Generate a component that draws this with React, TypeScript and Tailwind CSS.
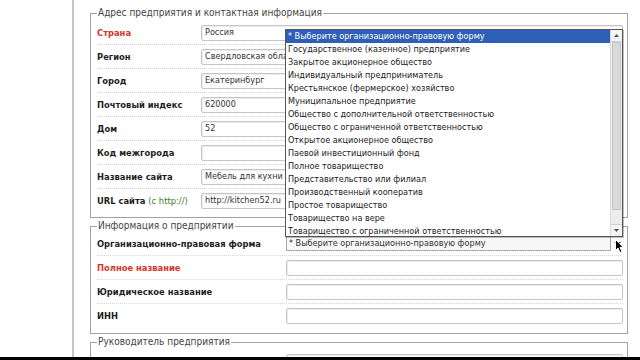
import React from "react";

const F = "'DejaVu Sans Condensed', 'DejaVu Sans', sans-serif";

type Row = { label: React.ReactNode; value?: string; red?: boolean; select?: boolean };

const addr: Row[] = [
  { label: "Страна", value: "Россия", red: true },
  { label: "Регион", value: "Свердловская область" },
  { label: "Город", value: "Екатеринбург" },
  { label: "Почтовый индекс", value: "620000" },
  { label: "Дом", value: "52" },
  { label: "Код межгорода", value: "" },
  { label: "Название сайта", value: "Мебель для кухни" },
  {
    label: (
      <>
        URL сайта <span className="font-normal text-[#3d7d2a]">(с http://)</span>
      </>
    ),
    value: "http://kitchen52.ru",
  },
];

const info: Row[] = [
  { label: "Организационно-правовая форма", select: true },
  { label: "Полное название", red: true, value: "" },
  { label: "Юридическое название", value: "" },
  { label: "ИНН", value: "" },
];

const options = [
  "* Выберите организационно-правовую форму",
  "Государственное (казенное) предприятие",
  "Закрытое акционерное общество",
  "Индивидуальный предприниматель",
  "Крестьянское (фермерское) хозяйство",
  "Муниципальное предприятие",
  "Общество с дополнительной ответственностью",
  "Общество с ограниченной ответственностью",
  "Открытое акционерное общество",
  "Паевой инвестиционный фонд",
  "Полное товарищество",
  "Представительство или филиал",
  "Производственный кооператив",
  "Простое товарищество",
  "Товарищество на вере",
  "Товарищество с ограниченной ответственностью",
];

function Input({ value }: { value?: string }) {
  return (
    <div className="flex-1 h-[16px] border border-[#c6c6c6] rounded-[2px] bg-white shadow-[inset_1px_1px_1px_rgba(0,0,0,0.08)] flex items-center pl-[3px] text-[9px] text-[#333] overflow-hidden whitespace-nowrap">
      {value}
    </div>
  );
}

function Select() {
  return (
    <div className="flex-1 flex items-center h-[16px]">
      <div className="flex-1 h-[15px] border border-[#a8a8a8] bg-[#f7f7f7] flex items-center pl-[2px] text-[9px] text-[#333] whitespace-nowrap overflow-hidden">
        * Выберите организационно-правовую форму
      </div>
      <div className="w-[12px] h-[15px] flex items-center justify-center">
        <svg width="7" height="4" viewBox="0 0 7 4">
          <path d="M0 0 L7 0 L3.5 4 Z" fill="#222" />
        </svg>
      </div>
    </div>
  );
}

function Rows({ rows, labelW }: { rows: Row[]; labelW: string }) {
  return (
    <>
      {rows.map((r, i) => (
        <div
          key={i}
          className={
            "flex items-center h-[24px] " +
            (i < rows.length - 1 ? "border-b border-dotted border-[#d6d6d6]" : "")
          }
        >
          <div
            className={
              labelW +
              " shrink-0 text-[9.3px] font-bold whitespace-nowrap " +
              (r.red ? "text-[#d8332b]" : "text-[#1e1e1e]")
            }
          >
            {r.label}
          </div>
          {r.select ? <Select /> : <Input value={r.value} />}
        </div>
      ))}
    </>
  );
}

function Fieldset({
  title,
  children,
  className,
}: {
  title: string;
  children: React.ReactNode;
  className?: string;
}) {
  return (
    <fieldset className={"border border-[#a3a3a3] pl-[6px] pr-[4px] " + (className ?? "")}>
      <legend className="px-[1px] text-[10px] leading-[12px] text-[#444]">{title}</legend>
      {children}
    </fieldset>
  );
}

function Dropdown() {
  return (
    <div className="absolute left-[285px] top-[29px] w-[338px] h-[208px] bg-white border border-[#555] shadow-[1px_1px_0_rgba(0,0,0,0.25)] flex">
      <div className="flex-1 flex flex-col overflow-hidden">
        {options.map((o, i) => (
          <div
            key={i}
            className={
              "h-[13px] leading-[13px] pl-[2px] text-[9px] whitespace-nowrap " +
              (i === 0 ? "bg-[#2e5fb6] text-white" : "text-[#222]")
            }
          >
            {o}
          </div>
        ))}
      </div>
      <div className="w-[12px] flex flex-col bg-[#ededed] border-l border-[#dcdcdc]">
        <div className="h-[12px] flex items-center justify-center bg-[#f4f4f4] border-b border-[#d0d0d0]">
          <svg width="5" height="3" viewBox="0 0 5 3">
            <path d="M0 3 L5 3 L2.5 0 Z" fill="#555" />
          </svg>
        </div>
        <div className="h-[168px] mx-[1px] bg-[#d9d9d9] border border-[#c4c4c4] rounded-[1px]" />
        <div className="flex-1" />
        <div className="h-[12px] flex items-center justify-center bg-[#f4f4f4] border-t border-[#d0d0d0]">
          <svg width="5" height="3" viewBox="0 0 5 3">
            <path d="M0 0 L5 0 L2.5 3 Z" fill="#555" />
          </svg>
        </div>
      </div>
    </div>
  );
}

export default function App() {
  return (
    <div className="w-[640px] h-[360px] bg-white flex flex-col overflow-hidden" style={{ fontFamily: F }}>
      <div className="flex-1 min-h-0 flex relative overflow-hidden">
        <div className="w-[72px] shrink-0" />
        <div className="flex-1 border-l-2 border-[#c6c6c6] pl-[16px] pt-[7px]">
          <div className="w-[538px] flex flex-col">
            <Fieldset title="Адрес предприятия и контактная информация" className="pt-[2px] pb-[4px]">
              <Rows rows={addr} labelW="w-[104px]" />
            </Fieldset>
            <Fieldset title="Информация о предприятии" className="mt-[2px] pb-[5px]">
              <Rows rows={info} labelW="w-[189px]" />
            </Fieldset>
            <Fieldset title="Руководитель предприятия" className="mt-[2px] pt-[2px]">
              <Rows rows={[{ label: "", value: "" }, { label: "", value: "" }]} labelW="w-[189px]" />
            </Fieldset>
          </div>
        </div>
        <Dropdown />
        <svg className="absolute left-[615px] top-[239px]" width="10" height="15" viewBox="0 0 10 15">
          <path d="M0.5 0.5 L0.5 11.5 L3 9 L5 13.5 L7 12.6 L5 8.3 L8.5 8.3 Z" fill="#000" stroke="#fff" strokeWidth="1" />
        </svg>
      </div>
      <div className="h-[3px] bg-black shrink-0" />
    </div>
  );
}
